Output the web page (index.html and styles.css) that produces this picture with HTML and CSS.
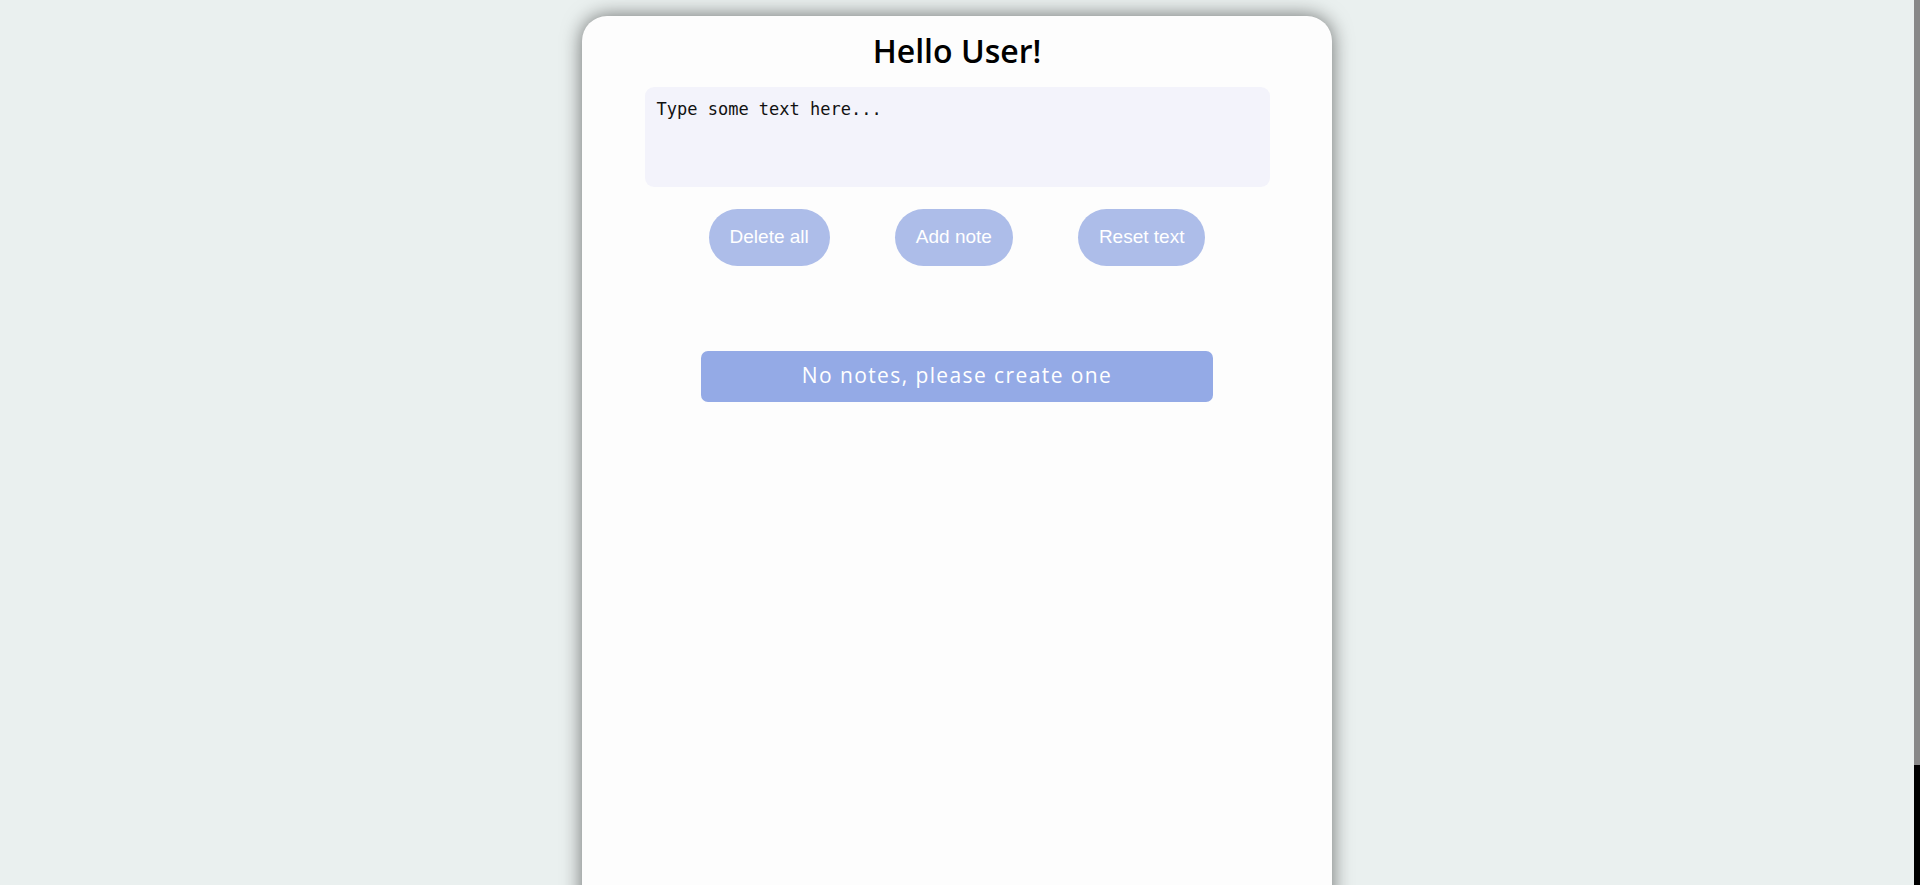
FILE: index.html
```html
<!DOCTYPE html>
<html lang="en">
<head>
<meta charset="utf-8">
<title>Notes</title>
<link rel="stylesheet" href="styles.css">
</head>
<body>
  <main class="card">
    <h1 class="title">Hello User!</h1>
    <textarea class="note-input" placeholder="Type some text here..."></textarea>
    <div class="actions">
      <button class="btn">Delete all</button>
      <button class="btn">Add note</button>
      <button class="btn">Reset text</button>
    </div>
    <div class="notes">
      <div class="empty">No notes, please create one</div>
    </div>
  </main>
</body>
</html>
```
FILE: styles.css
```css
html {
  background:
    linear-gradient(#888 0, #888 765px, #000 765px, #000 100%) right top / 6px 100% no-repeat,
    #eaf0ef;
}
body {
  margin: 0 6px 0 0;
  font-family: "Open Sans", "Liberation Sans", sans-serif;
}
.card {
  box-sizing: border-box;
  width: 750px;
  height: 1000px;
  margin: 16px auto 8px;
  background: #fdfdfd;
  border-radius: 25px;
  box-shadow: 0 0 20px rgba(0, 0, 0, 0.55);
  display: flex;
  flex-direction: column;
  align-items: center;
  padding-top: 15px;
}
.title {
  margin: 0;
  font-family: "Open Sans", sans-serif;
  font-weight: 600;
  font-size: 32px;
  line-height: 40px;
  color: #000;
}
.note-input {
  box-sizing: border-box;
  display: block;
  width: 625px;
  height: 100px;
  margin-top: 16px;
  padding: 12px 12px 11px;
  border: none;
  outline: none;
  resize: none;
  border-radius: 9px;
  background: #f3f3fb;
  font-family: "DejaVu Sans Mono", monospace;
  font-size: 17px;
  line-height: 20px;
  color: #000;
}
.note-input::placeholder {
  color: #111;
  opacity: 1;
}
.actions {
  display: flex;
  justify-content: center;
  gap: 65px;
  margin-top: 22px;
}
.btn {
  border: none;
  background: #adbde9;
  color: #fff;
  font-family: "Liberation Sans", Arial, sans-serif;
  font-size: 19px;
  line-height: 22px;
  padding: 17px 21px 18px;
  border-radius: 29px;
  cursor: pointer;
}
.notes {
  margin-top: 85px;
}
.empty {
  box-sizing: border-box;
  width: 512px;
  height: 51px;
  padding-bottom: 3px;
  border-radius: 7px;
  background: #94aae6;
  color: #fff;
  font-family: "Open Sans", sans-serif;
  font-size: 21px;
  letter-spacing: 1.4px;
  display: flex;
  align-items: center;
  justify-content: center;
}
```
